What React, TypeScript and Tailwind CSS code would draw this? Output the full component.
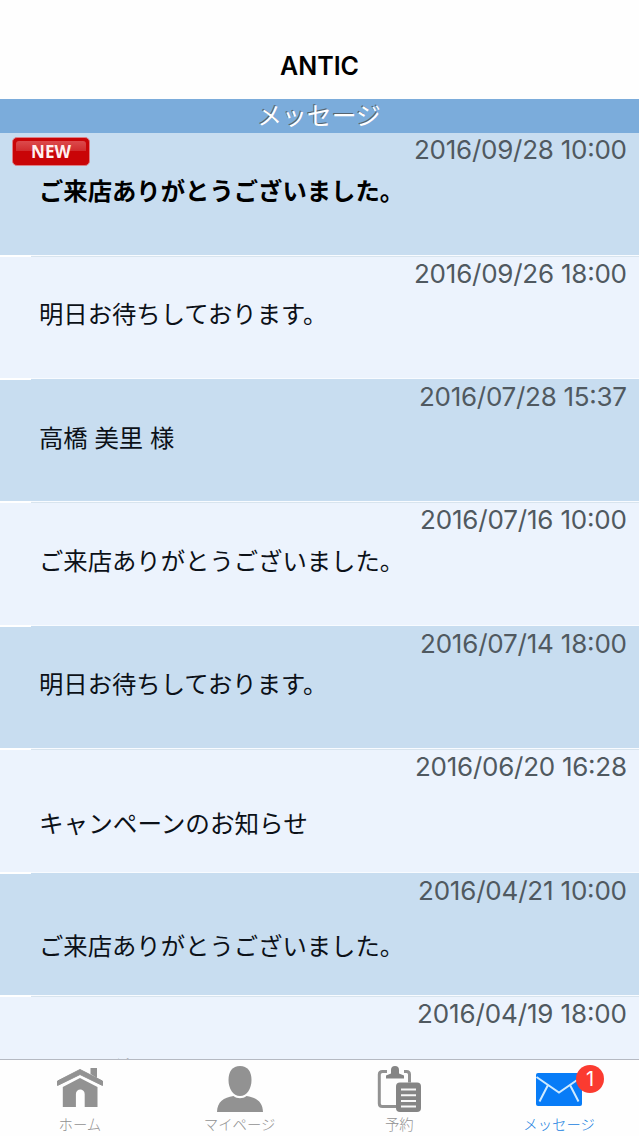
import React from 'react';

type Message = { date: string; width: number; title: string; isNew?: boolean; low?: boolean };

const messages: Message[] = [
  { date: '2016/09/28 10:00', width: 213, title: 'ご来店ありがとうございました。', isNew: true },
  { date: '2016/09/26 18:00', width: 213, title: '明日お待ちしております。' },
  { date: '2016/07/28 15:37', width: 208, title: '高橋 美里 様' },
  { date: '2016/07/16 10:00', width: 207, title: 'ご来店ありがとうございました。' },
  { date: '2016/07/14 18:00', width: 207, title: '明日お待ちしております。' },
  { date: '2016/06/20 16:28', width: 212, title: 'キャンペーンのお知らせ', low: true },
  { date: '2016/04/21 10:00', width: 209, title: 'ご来店ありがとうございました。', low: true },
  { date: '2016/04/19 18:00', width: 210, title: '明日お待ちしております。', low: true },
];

function NewBadge() {
  return (
    <div className="absolute left-[12px] top-[4px] flex h-[29px] w-[78px] items-center justify-center rounded-[5px] border border-[#dc7f86] bg-[#c90407]">
      <div className="absolute inset-x-[3px] top-[3px] h-[10px] rounded-t-[3px] bg-linear-to-b from-[#dc4a4c] to-[#d12a2d]" />
      <span className="relative font-['Open_Sans',sans-serif] text-[17px] leading-none font-bold text-[#fff0f0]">NEW</span>
    </div>
  );
}

function Row({ message, index }: { message: Message; index: number }) {
  const shaded = index % 2 === 0;
  return (
    <li
      className={`relative shrink-0 ${index === 0 ? 'h-[122.5px]' : 'h-[123.45px]'} ${shaded ? 'bg-[#c8ddf0]' : 'bg-[#ecf3fd]'}`}
    >
      {index > 0 && (
        <div className="absolute inset-x-0 top-[-1px] flex h-[2px]">
          <div className="w-[31px] bg-white" />
          <div className={`flex-1 border-t border-[#f8fbff] ${shaded ? 'bg-[#c8ddf0]' : 'bg-[#d8e4ee]'}`} />
        </div>
      )}
      {message.isNew && <NewBadge />}
      <div className="flex justify-end pr-[12.5px]">
        <svg width={message.width} height="34" className="overflow-visible" aria-label={message.date}>
          <text
            x="0"
            y={index === 0 ? 26 : 26.6}
            textLength={message.width}
            className="fill-[#505960] font-['Inter',sans-serif] text-[26px]"
          >
            {message.date}
          </text>
        </svg>
      </div>
      <p
        className={`pl-[39px] leading-[36px] whitespace-nowrap [word-spacing:1.3px] ${message.title.startsWith('キ') ? 'text-[24.6px]' : 'text-[24.35px]'} ${message.low ? 'mt-[20.6px]' : message.isNew ? 'mt-[5px]' : 'mt-[5.6px]'} ${message.isNew ? 'font-bold text-black' : 'font-normal text-[#0c1118]'}`}
      >
        {message.title}
      </p>
    </li>
  );
}

function HomeIcon() {
  return (
    <svg width="48" height="48" viewBox="0 0 48 48" fill="#929292">
      <path d="M34.500 4h6.500v10l-6.500-4z" />
      <path d="M24 5.500 46.500 17v4.500L24 10.500 1.500 21.500V17z" stroke="#929292" strokeWidth="1" strokeLinejoin="round" />
      <path d="M24 14 41.500 23v20H28.700V30c0-6-8.800-6-8.800 0v13H6.800V23z" />
    </svg>
  );
}

function PersonIcon() {
  return (
    <svg width="48" height="48" viewBox="0 0 48 48" fill="#929292">
      <path d="M24 2C16.500 2 12.500 7.500 12.500 16S17 32 24 32 35.500 24.500 35.500 16 31.500 2 24 2z" />
      <path d="M17.500 32c3.500 3 9.500 3 13 0 10 1.500 16.500 6 16.500 16.500H1C1 38 7.500 33.500 17.500 32z" />
    </svg>
  );
}

function ReserveIcon() {
  return (
    <svg width="48" height="48" viewBox="0 0 48 48" fill="none">
      <path d="M12 7.500H7.500Q4.300 7.500 4.300 10.500v29q0 3 3.200 3H21M29 7.500h2.500Q34.500 7.500 34.500 10.500v8" stroke="#929292" strokeWidth="3" />
      <path d="M11 14.500v-3l5-2V6q0-4 4-4t4 4v3.500l5 2v3z" fill="#858585" />
      <rect x="21" y="18.500" width="25" height="29.500" rx="4" fill="#858585" />
      <path d="M26 25.500h15M26 31.200h15M26 36.900h15M26 42.600h15" stroke="#f8f8f8" strokeWidth="2" />
    </svg>
  );
}

function MailIcon() {
  return (
    <svg width="48" height="48" viewBox="0 0 48 48" fill="none">
      <rect x="1" y="9" width="46" height="33" rx="2" fill="#087cf7" />
      <path d="M1.500 13 24 28.500 46.500 13M13 21 4.500 37.500M35 21l8.500 16.500" stroke="#cfeaff" strokeWidth="2" />
    </svg>
  );
}

const tabs = [
  { label: 'ホーム', icon: <HomeIcon /> },
  { label: 'マイページ', icon: <PersonIcon /> },
  { label: '予約', icon: <ReserveIcon /> },
  { label: 'メッセージ', icon: <MailIcon />, badge: 1 },
];

export default function App() {
  return (
    <div className="flex h-[1136px] w-[639px] flex-col overflow-hidden bg-[#fefefe] font-['Noto_Sans_CJK_JP',sans-serif]">
      <header className="flex h-[99px] shrink-0 items-end justify-center pb-[16.5px]">
        <h1 className="font-['Inter',sans-serif] text-[25px] leading-[34px] font-semibold text-black">ANTIC</h1>
      </header>
      <h2 className="flex h-[34px] shrink-0 items-center justify-center bg-[#7bacdb] pr-[1px] pb-[4px] text-[24.8px] leading-none font-normal text-white [text-shadow:-1px_-1px_0_#566470]">
        メッセージ
      </h2>
      <ul className="flex min-h-0 flex-1 flex-col overflow-hidden">
        {messages.map((message, index) => (
          <Row key={message.date} message={message} index={index} />
        ))}
      </ul>
      <nav className="grid h-[77px] shrink-0 grid-cols-4 border-t border-[#b5b9c2] bg-[#fefefe]">
        {tabs.map((tab) => (
          <div
            key={tab.label}
            className={`flex flex-col items-center pt-[4px] ${tab.badge ? 'text-[#187ee0]' : 'text-[#929292]'}`}
          >
            <div className="relative">
              {tab.icon}
              {tab.badge && (
                <span className="absolute top-[0.5px] left-[41px] flex size-[28px] items-center justify-center rounded-full bg-[#fb3b30] font-['Inter',sans-serif] text-[20px] leading-none text-white">
                  {tab.badge}
                </span>
              )}
            </div>
            <span className="mt-[1px] text-[14.4px] leading-[22px] font-light">{tab.label}</span>
          </div>
        ))}
      </nav>
    </div>
  );
}
